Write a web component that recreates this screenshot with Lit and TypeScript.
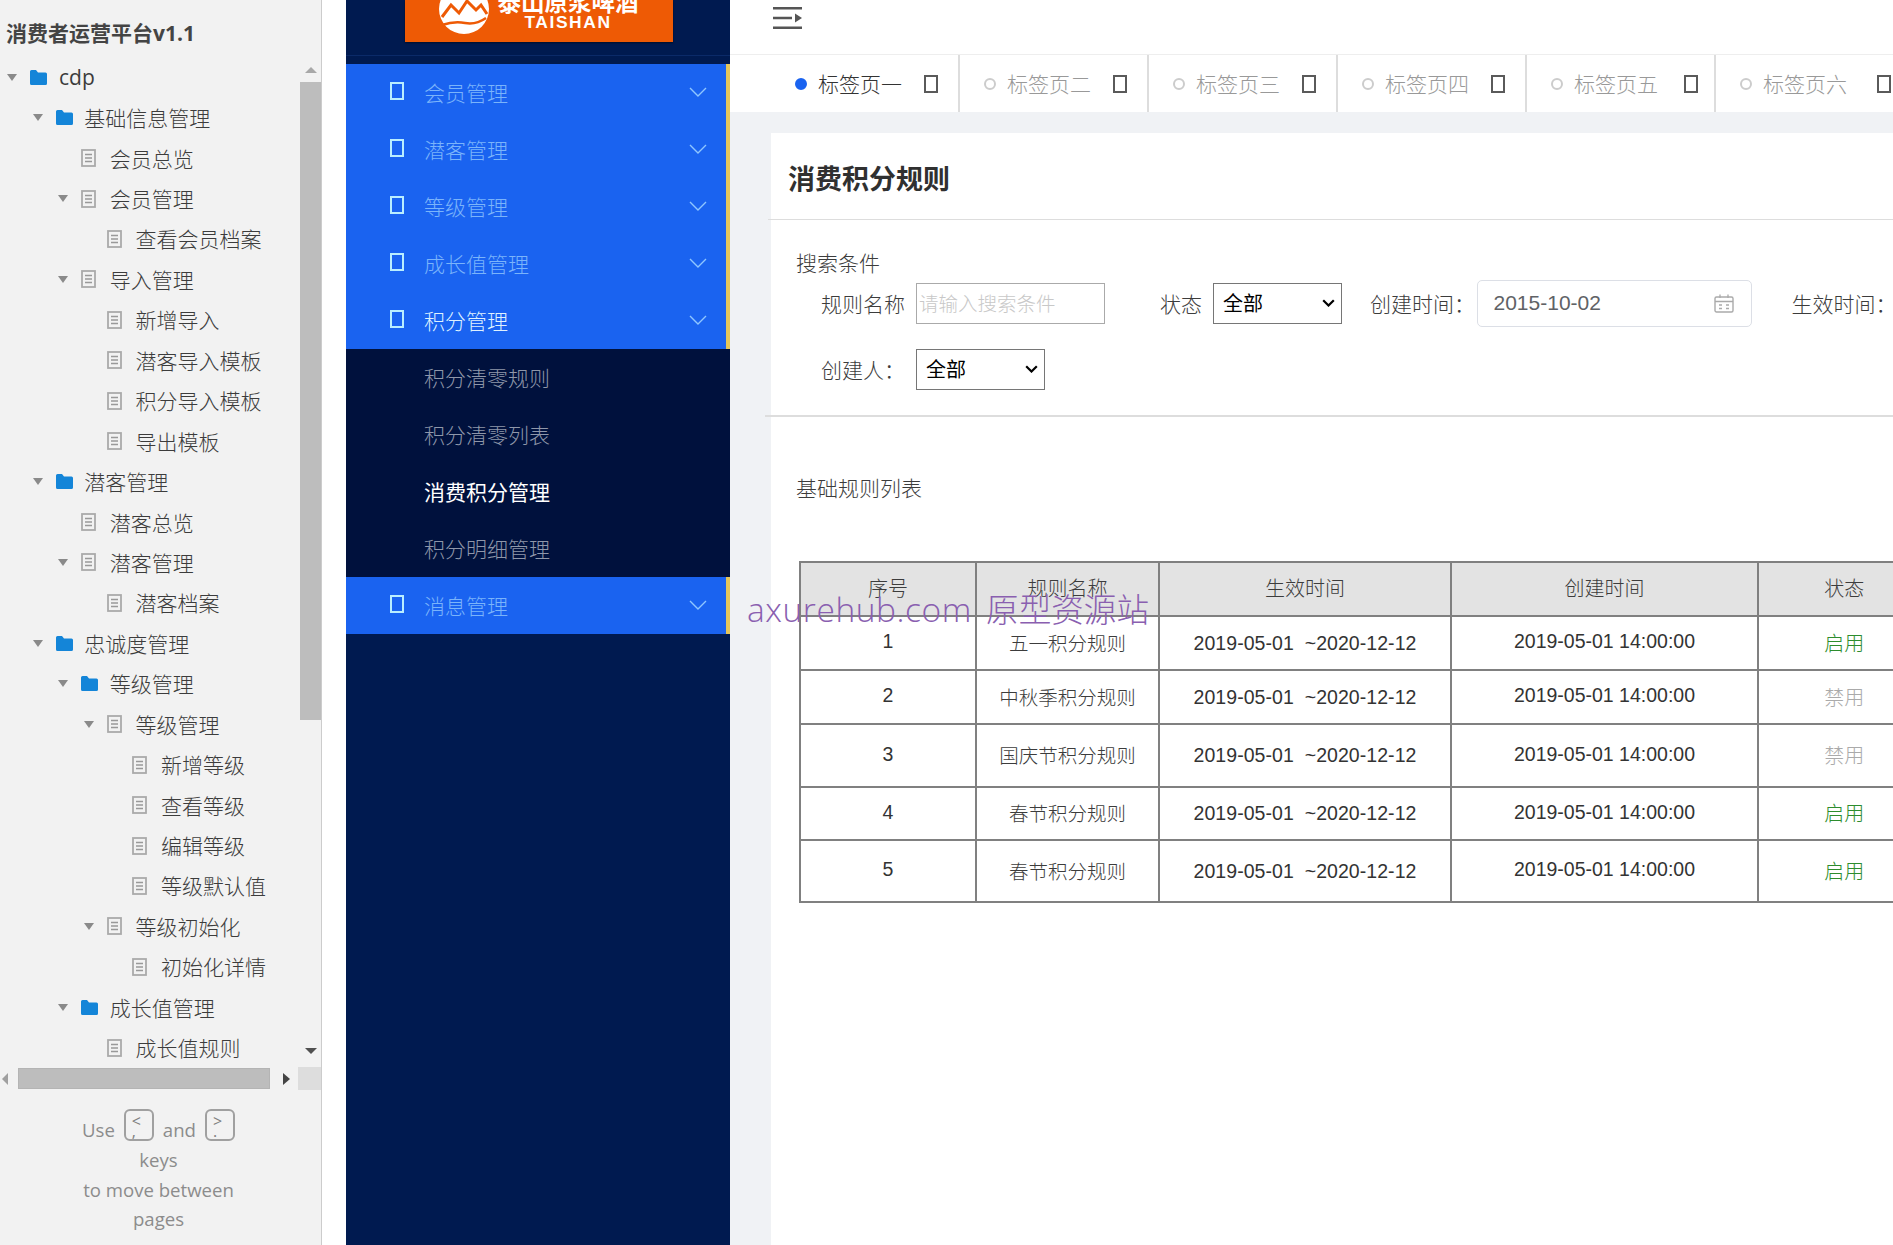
import { LitElement, html, css, svg } from "lit";
import { customElement } from "lit/decorators.js";

type TreeRow = { t: string; l: number; k: "f" | "d"; a: boolean };
const tree: TreeRow[] = [
  { t: "cdp", l: 0, k: "f", a: true },
  { t: "基础信息管理", l: 1, k: "f", a: true },
  { t: "会员总览", l: 2, k: "d", a: false },
  { t: "会员管理", l: 2, k: "d", a: true },
  { t: "查看会员档案", l: 3, k: "d", a: false },
  { t: "导入管理", l: 2, k: "d", a: true },
  { t: "新增导入", l: 3, k: "d", a: false },
  { t: "潜客导入模板", l: 3, k: "d", a: false },
  { t: "积分导入模板", l: 3, k: "d", a: false },
  { t: "导出模板", l: 3, k: "d", a: false },
  { t: "潜客管理", l: 1, k: "f", a: true },
  { t: "潜客总览", l: 2, k: "d", a: false },
  { t: "潜客管理", l: 2, k: "d", a: true },
  { t: "潜客档案", l: 3, k: "d", a: false },
  { t: "忠诚度管理", l: 1, k: "f", a: true },
  { t: "等级管理", l: 2, k: "f", a: true },
  { t: "等级管理", l: 3, k: "d", a: true },
  { t: "新增等级", l: 4, k: "d", a: false },
  { t: "查看等级", l: 4, k: "d", a: false },
  { t: "编辑等级", l: 4, k: "d", a: false },
  { t: "等级默认值", l: 4, k: "d", a: false },
  { t: "等级初始化", l: 3, k: "d", a: true },
  { t: "初始化详情", l: 4, k: "d", a: false },
  { t: "成长值管理", l: 2, k: "f", a: true },
  { t: "成长值规则", l: 3, k: "d", a: false },
];

const tabs = ["标签页一", "标签页二", "标签页三", "标签页四", "标签页五", "标签页六"];
const rows = [
  { n: "1", name: "五一积分规则", on: true, c: "r1" },
  { n: "2", name: "中秋季积分规则", on: false, c: "r2" },
  { n: "3", name: "国庆节积分规则", on: false, c: "r3" },
  { n: "4", name: "春节积分规则", on: true, c: "r4" },
  { n: "5", name: "春节积分规则", on: true, c: "r5" },
];

const folderIcon = svg`<svg width="17" height="15" viewBox="0 0 17 15"><path d="M0 1.5 Q0 0 1.5 0 H6 L8 2.5 H15.5 Q17 2.5 17 4 V13.5 Q17 15 15.5 15 H1.5 Q0 15 0 13.5 Z" fill="#1485d8"/></svg>`;
const docIcon = svg`<svg class="doc" width="15" height="18" viewBox="0 0 15 18"><rect x="1" y="1" width="13" height="16" fill="none" stroke="#aaa" stroke-width="1.8"/><path d="M4 5.5H11M4 9H11M4 12.5H11" stroke="#999" stroke-width="1.3"/></svg>`;
const chevron = svg`<svg width="18" height="10" viewBox="0 0 18 10"><path d="M1 1 L9 9 L17 1" fill="none" stroke="#8fc6ff" stroke-width="1.4"/></svg>`;
const selChevron = svg`<svg class="selc" width="13" height="8" viewBox="0 0 13 8"><path d="M1.2 1.2 L6.5 6.5 L11.8 1.2" fill="none" stroke="#000" stroke-width="2.2"/></svg>`;

@customElement("app-root")
export class AppRoot extends LitElement {
  static styles = css`
    :host {
      display: flex;
      width: 1893px;
      height: 1245px;
      overflow: hidden;
      background: #fff;
      font-family: "Noto Sans CJK SC", "Liberation Sans", sans-serif;
      font-size: 21px;
      font-weight: 300;
      color: #333;
    }
    * { box-sizing: border-box; }

    .left {
      width: 322px;
      flex: none;
      background: #f2f2f2;
      border-right: 1px solid #ccc;
      display: flex;
      flex-direction: column;
    }
    .ptitle {
      height: 57px;
      padding: 17px 0 0 6px;
      font-family: "Open Sans", "Noto Sans CJK SC", sans-serif;
      font-weight: 700;
      font-size: 21px;
      line-height: 32px;
      color: #444;
    }
    .treewrap { display: flex; height: 1010px; overflow: hidden; }
    .tree { flex: 1; min-width: 0; }
    .trow { height: 40.45px; display: flex; align-items: center; color: #3c3c3c; white-space: nowrap; }
    .lv0 { padding-left: 6px; }
    .lv1 { padding-left: 31.6px; }
    .lv2 { padding-left: 57.2px; }
    .lv3 { padding-left: 82.8px; }
    .lv4 { padding-left: 108.4px; }
    .arrow { width: 24px; flex: none; display: flex; }
    .arrow i {
      width: 0; height: 0; margin-left: 1px;
      border-left: 5.5px solid transparent;
      border-right: 5.5px solid transparent;
      border-top: 7px solid #8a8a8a;
    }
    .ico { width: 17px; flex: none; display: flex; justify-content: center; }
    .ico svg { display: block; }
    .ico .doc { margin-right: 2px; }
    .lbl { margin-left: 11.6px; line-height: 38px; padding-bottom: 1px; }
    .latin { font-family: "Open Sans", sans-serif; font-size: 21px; font-weight: 400; margin-left: 12px; }

    .vbar { width: 21px; flex: none; display: flex; flex-direction: column; align-items: center; }
    .vup {
      height: 25px; width: 100%; display: flex; justify-content: center; padding-top: 10px;
    }
    .vup i {
      width: 0; height: 0;
      border-left: 6px solid transparent; border-right: 6px solid transparent;
      border-bottom: 6px solid #a8a8a8;
    }
    .vthumb { width: 100%; height: 638px; background: #bdbdbd; }
    .vrest { flex: 1; width: 100%; display: flex; justify-content: center; align-items: flex-end; padding-bottom: 13px; }
    .vrest i {
      width: 0; height: 0;
      border-left: 6px solid transparent; border-right: 6px solid transparent;
      border-top: 6px solid #505050;
    }
    .hbar { height: 23px; display: flex; align-items: center; }
    .hl {
      width: 0; height: 0; margin-left: 2px;
      border-top: 6px solid transparent; border-bottom: 6px solid transparent;
      border-right: 6px solid #a0a0a0;
    }
    .hthumb { width: 252px; height: 21px; margin-left: 10px; background: #bdbdbd; border: 1px solid #b4b4b4; }
    .hr {
      width: 0; height: 0; margin-left: 13px;
      border-top: 6px solid transparent; border-bottom: 6px solid transparent;
      border-left: 7px solid #444;
    }
    .hcorner { width: 23px; height: 23px; margin-left: 8px; background: #ddd; }
    .help {
      padding: 25px 33px 0 29px;
      text-align: center;
      font-family: "Open Sans", sans-serif;
      font-weight: 400;
      font-size: 18.6px;
      line-height: 29.6px;
      color: #8c8c8c;
    }
    .keyline { display: flex; justify-content: center; align-items: center; gap: 9px; height: 30px; white-space: nowrap; }
    .key {
      width: 30px; height: 32px; flex: none;
      border: 2px solid #a0a0a0; border-radius: 6px;
      font-size: 16px; line-height: 10px; text-align: left; padding: 5px 0 0 6px;
      color: #808080;
      margin-top: -10px;
    }

    .gutter { width: 24px; flex: none; background: #fff; }

    .side { width: 384px; flex: none; background: #001a50; display: flex; flex-direction: column; }
    .brand { height: 64px; flex: none; }
    .brandtop { height: 56px; border-bottom: 1px solid #0b2a68; padding-left: 59px; }
    .logo {
      width: 268px; height: 42px; background: #ee5a05; overflow: hidden;
      display: flex; align-items: flex-end; color: #fff;
      box-shadow: 0 1px 2px #00000080;
    }
    .logo svg { margin: 0 0 6px 34px; flex: none; }
    .logotext { margin-left: 4px; width: 150px; text-align: center; font-family: "Liberation Sans", sans-serif; }
    .cn { font-family: "Noto Sans CJK SC", sans-serif; font-weight: 700; font-size: 23.5px; line-height: 24px; margin-bottom: -1px; white-space: nowrap; }
    .en { font-weight: 700; font-size: 17.4px; line-height: 20px; letter-spacing: 1.6px; margin-bottom: 10px; }
    .m {
      height: 57px; background: #1a63f0; border-right: 4px solid #e5c65a;
      display: flex; align-items: center; padding-left: 44px; color: #7ab4fb;
    }
    .m.on { color: #dff1ff; height: 57px; }
    .tofu { width: 14px; height: 18px; border: 2.5px solid #b9eeff; margin-top: -4px; flex: none; }
    .mt { margin-left: 20px; flex: 1; padding-bottom: 2px; }
    .m svg { margin: -2px 19px 0 0; }
    .subs { background: #00113d; }
    .s { height: 57px; display: flex; align-items: center; padding: 0 0 2px 78px; color: #8f97aa; }
    .s.cur { color: #fff; font-weight: 400; }
    .sidefill { flex: 1; }

    .main { flex: 1; min-width: 0; background: #f0f2f5; display: flex; flex-direction: column; position: relative; overflow: hidden; }
    .head { height: 55px; flex: none; background: #fff; border-bottom: 1px solid #eee; padding: 7px 0 0 43px; }
    .head svg { display: block; }
    .tabs { height: 57px; flex: none; background: #fff; display: flex; padding-left: 41px; overflow: hidden; }
    .tab {
      width: 189px; flex: none; border-right: 2px solid #ddd;
      display: flex; align-items: center; padding-left: 24px; color: #999;
    }
    .tab.first { color: #333; }
    .dot { width: 12px; height: 12px; border-radius: 50%; border: 2px solid #ccc; flex: none; }
    .first .dot { background: #1a63f0; border-color: #1a63f0; }
    .tabt { margin-left: 11px; width: 84px; flex: none; white-space: nowrap; padding-bottom: 2px; }
    .tabx { margin-left: 22px; width: 14px; height: 18px; border: 2.5px solid #5a5a5a; flex: none; }
    .t4 .tabx { margin-left: 25.5px; }
    .t5 .tabx { margin-left: 30px; }

    .body { flex: 1; padding: 21px 0 0 41px; overflow: hidden; }
    .card { background: #fff; height: 100%; width: 1300px; }
    .ctitle {
      height: 87px; border-bottom: 1px solid #ddd; margin-left: -3px; padding-left: 20px;
      font-size: 27px; font-weight: 700; line-height: 90px; color: #303030;
    }
    .sect { padding: 26.6px 0 0 25px; line-height: 30px; color: #3c3c3c; }
    .frow { display: flex; align-items: center; margin-left: 50px; white-space: nowrap; color: #3c3c3c; }
    .frow.one { height: 47px; margin-top: 3.2px; }
    .frow.two { height: 41px; margin-top: 21.8px; }
    .fl { width: 95px; flex: none; padding-bottom: 1.5px; }
    .two .fl { padding-bottom: 0; }
    .in {
      width: 189px; height: 41px; border: 1px solid #aaa; padding: 0 2px 2px; flex: none;
      font: inherit; font-size: 19.5px; background: #fff; outline: none;
    }
    .in::placeholder { color: #c8c8c8; }
    .selw { position: relative; width: 129px; height: 41px; flex: none; }
    select {
      appearance: none;
      width: 129px; height: 41px; display: block; border: 1px solid #767676; background: #fff;
      font-family: "Noto Sans CJK SC", sans-serif; font-size: 20px; color: #000; padding: 0 0 2px 9px;
      border-radius: 0;
    }
    .selc { position: absolute; right: 7px; top: 16px; pointer-events: none; }
    .st { margin-left: 55px; width: 53px; flex: none; padding-bottom: 1.5px; }
    .ct { margin-left: 28px; width: 106.5px; flex: none; padding-bottom: 1.5px; }
    .date {
      width: 275px; height: 47px; flex: none; border: 1px solid #dcdfe6; border-radius: 5px;
      display: flex; align-items: center; padding: 0 17px 0 16px;
      font-family: "Liberation Sans", sans-serif; font-size: 21px; font-weight: 400; color: #606266;
      justify-content: space-between;
    }
    .sx { margin-left: 40px; padding-bottom: 1.5px; }
    .rule { height: 2px; background: #ddd; margin: 25.2px 0 0 -6px; }
    .sect2 { padding: 54.8px 0 0 25px; line-height: 30px; color: #3c3c3c; }

    table {
      border-collapse: collapse; table-layout: fixed; width: 1130.5px; margin: 59.2px 0 0 28px;
    }
    td, th {
      border: 2px solid #808080; text-align: center; padding: 0 0 2px; font-weight: 300; color: #3c3c3c;
      font-size: 19.5px;
    }
    th { background: #e3e3e3; font-size: 20px; }
    .num { font-family: "Liberation Sans", sans-serif; font-size: 19.5px; font-weight: 400; color: #333; padding-bottom: 3px; }
    .dt { padding-bottom: 0; letter-spacing: 0.05px; }
    .h0 { height: 54px; }
    .r1 { height: 54.5px; }
    .r2 { height: 54px; }
    .r3 { height: 63px; }
    .r4 { height: 53px; }
    .r5 { height: 62px; }
    td.on { color: #2d8c2d; font-size: 20px; }
    td.off { color: #aaa; font-size: 20px; }
    .wm {
      position: absolute; left: 17px; top: 584px; white-space: nowrap;
      font-family: "Open Sans", sans-serif;
      font-size: 33.5px; font-weight: 300; line-height: 48px; color: #8a5fb0; letter-spacing: 0.55px;
    }
    .wmc { font-family: "Noto Sans CJK SC", sans-serif; font-size: 32.6px; letter-spacing: 0; margin-left: 5px; }
  `;

  render() {
    return html`
      <aside class="left">
        <div class="ptitle">消费者运营平台v1.1</div>
        <div class="treewrap">
          <div class="tree">
            ${tree.map(
              (r) => html`<div class="trow lv${r.l}">
                <span class="arrow">${r.a ? html`<i></i>` : ""}</span>
                <span class="ico">${r.k === "f" ? folderIcon : docIcon}</span>
                <span class="lbl ${r.t === "cdp" ? "latin" : ""}">${r.t}</span>
              </div>`
            )}
          </div>
          <div class="vbar">
            <div class="vup"><i></i></div>
            <div class="vthumb"></div>
            <div class="vrest"><i></i></div>
          </div>
        </div>
        <div class="hbar">
          <i class="hl"></i><div class="hthumb"></div><i class="hr"></i><div class="hcorner"></div>
        </div>
        <div class="help">
          <div class="keyline">Use <span class="key">&lt;<br />,</span> and <span class="key">&gt;<br />.</span></div>
          <div>keys</div>
          <div>to move between</div>
          <div>pages</div>
        </div>
      </aside>
      <div class="gutter"></div>
      <nav class="side">
        <div class="brand">
          <div class="brandtop">
            <div class="logo">
              <svg width="50" height="36" viewBox="0 0 50 36">
                <circle cx="25" cy="9" r="25" fill="#fff" />
                <path d="M3 17 L12 5 L20 13 L28 1 L37 10 L42 5 L48 14" fill="none" stroke="#ee5a05" stroke-width="3" />
                <path d="M3 25 Q15 21 26 23 T47 18" fill="none" stroke="#ee5a05" stroke-width="2.5" />
              </svg>
              <div class="logotext">
                <div class="cn">泰山原浆啤酒</div>
                <div class="en">TAISHAN</div>
              </div>
            </div>
          </div>
        </div>
        ${["会员管理", "潜客管理", "等级管理", "成长值管理", "积分管理"].map(
          (t, i) => html`<div class="m ${i === 4 ? "on" : ""}">
            <span class="tofu"></span><span class="mt">${t}</span>${chevron}
          </div>`
        )}
        <div class="subs">
          ${["积分清零规则", "积分清零列表", "消费积分管理", "积分明细管理"].map(
            (t, i) => html`<div class="s ${i === 2 ? "cur" : ""}">${t}</div>`
          )}
        </div>
        <div class="m"><span class="tofu"></span><span class="mt">消息管理</span>${chevron}</div>
        <div class="sidefill"></div>
      </nav>
      <main class="main">
        <div class="head">
          <svg width="30" height="22" viewBox="0 0 30 22">
            <path d="M0 1.2H29M0 11H19M0 20.8H29" stroke="#555" stroke-width="2.4" />
            <path d="M22 6.5 L29 11 L22 15.5 Z" fill="#555" />
          </svg>
        </div>
        <div class="tabs">
          ${tabs.map(
            (t, i) => html`<div class="tab t${i} ${i === 0 ? "first" : ""}">
              <span class="dot"></span><span class="tabt">${t}</span><span class="tabx"></span>
            </div>`
          )}
        </div>
        <div class="body">
          <section class="card">
            <div class="ctitle">消费积分规则</div>
            <div class="sect">搜索条件</div>
            <div class="frow one">
              <span class="fl">规则名称</span>
              <input class="in" placeholder="请输入搜索条件" />
              <span class="st">状态</span>
              <div class="selw"><select><option>全部</option></select>${selChevron}</div>
              <span class="ct">创建时间：</span>
              <div class="date">
                2015-10-02
                <svg width="20" height="19" viewBox="0 0 20 19">
                  <rect x="1" y="3" width="18" height="15" rx="1.5" fill="none" stroke="#aaa" stroke-width="1.4" />
                  <path d="M1 7.5H19M6 0.5V4M14 0.5V4M5 11H8M12 11H15M5 14.5H8M12 14.5H15" stroke="#aaa" stroke-width="1.3" />
                </svg>
              </div>
              <span class="sx">生效时间：</span>
            </div>
            <div class="frow two">
              <span class="fl">创建人：</span>
              <div class="selw"><select><option>全部</option></select>${selChevron}</div>
            </div>
            <div class="rule"></div>
            <div class="sect2">基础规则列表</div>
            <table>
              <colgroup>
                <col style="width:176px" /><col style="width:183px" /><col style="width:292px" /><col style="width:307px" /><col style="width:172.5px" />
              </colgroup>
              <thead>
                <tr class="h0"><th>序号</th><th>规则名称</th><th>生效时间</th><th>创建时间</th><th>状态</th></tr>
              </thead>
              <tbody>
                ${rows.map(
                  (r) => html`<tr class="${r.c}">
                    <td class="num">${r.n}</td>
                    <td>${r.name}</td>
                    <td class="num dt">2019-05-01&nbsp;&nbsp;~2020-12-12</td>
                    <td class="num">2019-05-01 14:00:00</td>
                    <td class="${r.on ? "on" : "off"}">${r.on ? "启用" : "禁用"}</td>
                  </tr>`
                )}
              </tbody>
            </table>
          </section>
        </div>
        <div class="wm">axurehub.com <span class="wmc">原型资源站</span></div>
      </main>
    `;
  }
}
